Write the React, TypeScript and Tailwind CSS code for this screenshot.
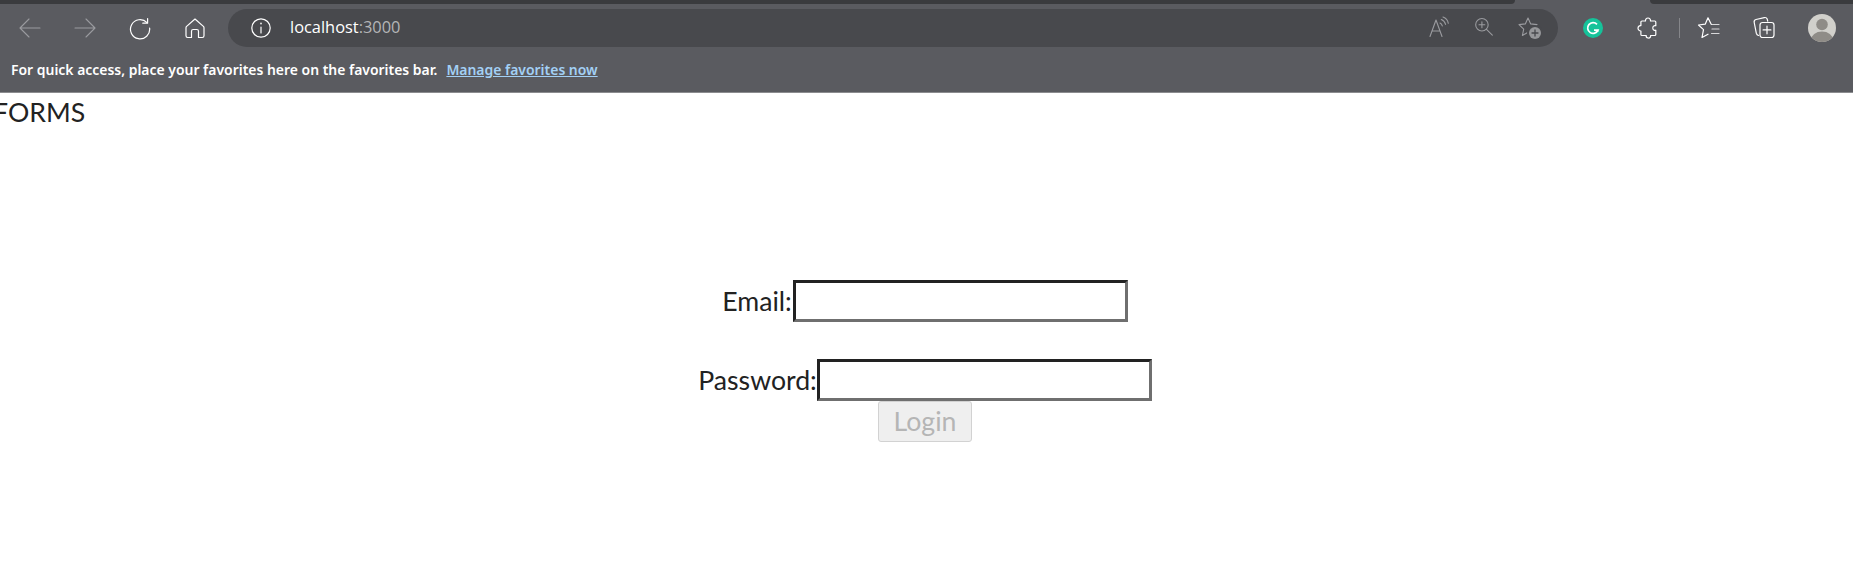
import React from "react";

const stroke = { fill: "none", strokeLinecap: "round", strokeLinejoin: "round" } as const;

const BackIcon = () => (
  <svg width="24" height="24" viewBox="0 0 24 24" stroke="#9a9b9f" strokeWidth="1.1" {...stroke}>
    <path d="M2 12h20M11 3l-9 9 9 9" />
  </svg>
);

const ForwardIcon = () => (
  <svg width="24" height="24" viewBox="0 0 24 24" stroke="#9a9b9f" strokeWidth="1.1" {...stroke}>
    <path d="M2 12h20M13 3l9 9-9 9" />
  </svg>
);

const RefreshIcon = () => (
  <svg width="24" height="24" viewBox="0 0 24 24" stroke="#fff" strokeWidth="1.2" {...stroke}>
    <path d="M19 6.600A9.600 9.600 0 1 0 21.600 12" />
    <path d="M19.600 2.600v4.600h-4.800" />
  </svg>
);

const HomeIcon = () => (
  <svg width="24" height="24" viewBox="0 0 24 24" stroke="#fff" strokeWidth="1.2" {...stroke}>
    <path d="M12 3l8.400 7.400c.4.4.6.8.6 1.400v8c0 1-.7 1.700-1.600 1.700h-3.900v-6.300c0-1-.7-1.700-1.700-1.700h-3.600c-1 0-1.700.7-1.700 1.700v6.300H4.600c-.9 0-1.600-.7-1.600-1.700v-8c0-.6.2-1 .6-1.400z" />
  </svg>
);

const InfoIcon = () => (
  <svg width="24" height="24" viewBox="0 0 24 24" stroke="#fff" strokeWidth="1.2" {...stroke}>
    <circle cx="12" cy="12" r="9.200" />
    <path d="M12 11v6" />
    <path d="M12 7.400v.3" strokeWidth="1.600" />
  </svg>
);

const ReadAloudIcon = () => (
  <svg width="22" height="22" viewBox="0 0 22 22" stroke="#9a9b9f" strokeWidth="1.1" {...stroke}>
    <path d="M3 20.500L9 4l6 16.500M5 15h8" />
    <path d="M13 7c1.300.6 2 1.600 2.300 2.900M14.300 3.500c2.300.8 3.700 2.600 4.300 4.900M16 1c3 1 4.800 3.300 5.300 6.300" />
  </svg>
);

const ZoomIcon = () => (
  <svg width="20" height="20" viewBox="0 0 24 24" stroke="#9a9b9f" strokeWidth="1.3" {...stroke}>
    <circle cx="9.500" cy="10.500" r="7.500" />
    <path d="M15 16l7 7M9.500 7v7M6 10.500h7" />
  </svg>
);

const FavAddIcon = () => (
  <svg width="24" height="24" viewBox="0 0 24 24" {...stroke}>
    <path
      d="M10 2l2.700 5.900 6.300.7-4.700 4.300 1.300 6.300L10 16.200 4.400 19.500l1.300-6.400L1 8.600l6.300-.7z"
      stroke="#9a9b9f"
      strokeWidth="1.100"
    />
    <circle cx="17" cy="17" r="8" fill="#48494d" stroke="none" />
    <circle cx="17" cy="17" r="6" fill="#96979a" stroke="none" />
    <path d="M17 14v6M14 17h6" stroke="#48494d" strokeWidth="1.300" />
  </svg>
);

const GrammarlyIcon = () => (
  <svg width="20" height="20" viewBox="0 0 20 20">
    <circle cx="10" cy="10" r="10" fill="#15c39a" />
    <path
      d="M14 6.300A5.400 5.400 0 1 0 15 12.200h-4"
      fill="none"
      stroke="#fff"
      strokeWidth="1.700"
    />
    <path d="M15.800 13.800l-2.800-.2 1.800-2.200z" fill="#fff" />
  </svg>
);

const PuzzleIcon = () => (
  <svg width="24" height="24" viewBox="0 0 24 24" stroke="#fff" strokeWidth="1.2" {...stroke}>
    <path d="M9.500 5c-.3-1.800 1-3 2.500-3s2.800 1.200 2.500 3h4.200c.7 0 1.100.5 1.100 1.100v3.600c-1.500-.6-3 .5-3 2.200s1.500 2.900 3 2.300v4.300c0 .6-.4 1-1 1h-4.200c.3 1.700-1 2.900-2.500 2.500-1.400-.3-2.100-1.500-1.900-2.500H6c-.6 0-1.100-.5-1.100-1.100v-3.400C3.200 15 2 13.700 2 12.200s1.200-2.900 2.900-2.500V6.100C4.900 5.500 5.400 5 6 5z" />
  </svg>
);

const FavoritesIcon = () => (
  <svg width="24" height="24" viewBox="0 0 24 24" stroke="#fff" strokeWidth="1.2" {...stroke}>
    <path d="M16 8.500l-1.800-.2L11 1.800 8.200 8.200 1.500 9l5 4.600L5 21.500l6-3.300" />
    <path d="M15 8.500h7M15 13h7M14.500 17.500h7.500" stroke="#d8d8da" />
  </svg>
);

const CollectionsIcon = () => (
  <svg width="24" height="24" viewBox="0 0 24 24" stroke="#fff" strokeWidth="1.2" {...stroke}>
    <path d="M6.500 19.500c-1.200-.4-1.800-1.100-2.200-2.300L2.200 6.500C1.900 5 2.700 3.800 4 3.500l8.300-1.900c1.300-.3 2.400.3 2.900 1.500l.5 2" />
    <rect x="8" y="6.500" width="14" height="15" rx="2.500" />
    <path d="M15 10v7.800M11.100 13.900h7.800" />
  </svg>
);

const Avatar = () => (
  <svg width="28" height="28" viewBox="0 0 28 28">
    <defs>
      <clipPath id="avatar-clip">
        <circle cx="14" cy="14" r="14" />
      </clipPath>
    </defs>
    <g clipPath="url(#avatar-clip)">
      <rect width="28" height="28" fill="#d1d0cb" />
      <circle cx="14" cy="10.500" r="5.800" fill="#8f8c87" />
      <ellipse cx="14" cy="26" rx="11" ry="8.500" fill="#8f8c87" />
    </g>
  </svg>
);

export default function App() {
  return (
    <div className="min-h-[563px] overflow-hidden bg-white font-['Lato',sans-serif] text-[#222222]">
      {/* Browser chrome */}
      <div className="h-[93px] bg-[#5a5b60] border-b border-[#8b8c8f] flex flex-col">
        <div className="h-[4px] flex justify-between">
          <div className="w-[1515px] bg-[#3a3b3e] rounded-br-[5px]" />
          <div className="w-[203px] bg-[#3a3b3e] rounded-bl-[5px]" />
        </div>

        {/* Toolbar */}
        <div className="h-[46px] flex items-center pl-[2px] pt-[1px]">
          <div className="w-[55px] flex justify-center"><BackIcon /></div>
          <div className="w-[55px] flex justify-center"><ForwardIcon /></div>
          <div className="w-[55px] flex justify-center"><RefreshIcon /></div>
          <div className="w-[55px] flex justify-center"><HomeIcon /></div>

          <div className="ml-[6px] w-[1330px] h-[38px] rounded-full bg-[#48494d] flex items-center pl-[21px] pr-[5px]">
            <InfoIcon />
            <span className="ml-[17px] text-[16.4px] text-white font-['Open_Sans',sans-serif]">
              localhost<span className="text-[#b4b5b7]">:3000</span>
            </span>
            <div className="ml-auto flex">
              <div className="w-[46px] flex justify-center"><ReadAloudIcon /></div>
              <div className="w-[46px] flex justify-center"><ZoomIcon /></div>
              <div className="w-[46px] flex justify-center"><FavAddIcon /></div>
            </div>
          </div>

          <div className="ml-[25px] w-[20px] flex justify-center"><GrammarlyIcon /></div>
          <div className="ml-[33px] w-[24px] flex justify-center"><PuzzleIcon /></div>
          <div className="ml-[19px] w-px h-[20px] bg-[#85868a]" />
          <div className="ml-[17px] w-[24px] flex justify-center"><FavoritesIcon /></div>
          <div className="ml-[31px] w-[24px] flex justify-center"><CollectionsIcon /></div>
          <div className="ml-[32px] w-[28px] flex justify-center"><Avatar /></div>
        </div>

        {/* Favorites bar */}
        <div className="flex-1 flex items-center pl-[11px] pb-[1px] text-[13.95px] font-semibold text-white font-['Noto_Sans',sans-serif]">
          <span>For quick access, place your favorites here on the favorites bar.</span>
          <a className="ml-[9px] text-[#a3d0f5] underline">Manage favorites now</a>
        </div>
      </div>

      {/* Page */}
      <div className="text-[26.67px] leading-[38px] -ml-[7px]">FORMS</div>

      <form className="mt-[149px] flex flex-col items-center pr-[3px]">
        <div className="flex items-center">
          <label className="text-[26.67px] mr-px">Email:</label>
          <input className="w-[335px] h-[42px] border-[3px] border-t-[#222222] border-l-[#222222] border-b-[#6f6f6f] border-r-[#6f6f6f] bg-white" />
        </div>
        <div className="mt-[37px] flex items-center">
          <label className="text-[26.67px]">Password:</label>
          <input className="w-[335px] h-[42px] border-[3px] border-t-[#222222] border-l-[#222222] border-b-[#6f6f6f] border-r-[#6f6f6f] bg-white" />
        </div>
        <button
          type="button"
          disabled
          className="w-[94px] h-[41px] text-[26.67px] leading-[36px] pb-[2px] text-[#b5b5b5] bg-[#efefef] border border-[#d2d2d2] rounded-[3px]"
        >
          Login
        </button>
      </form>
    </div>
  );
}
